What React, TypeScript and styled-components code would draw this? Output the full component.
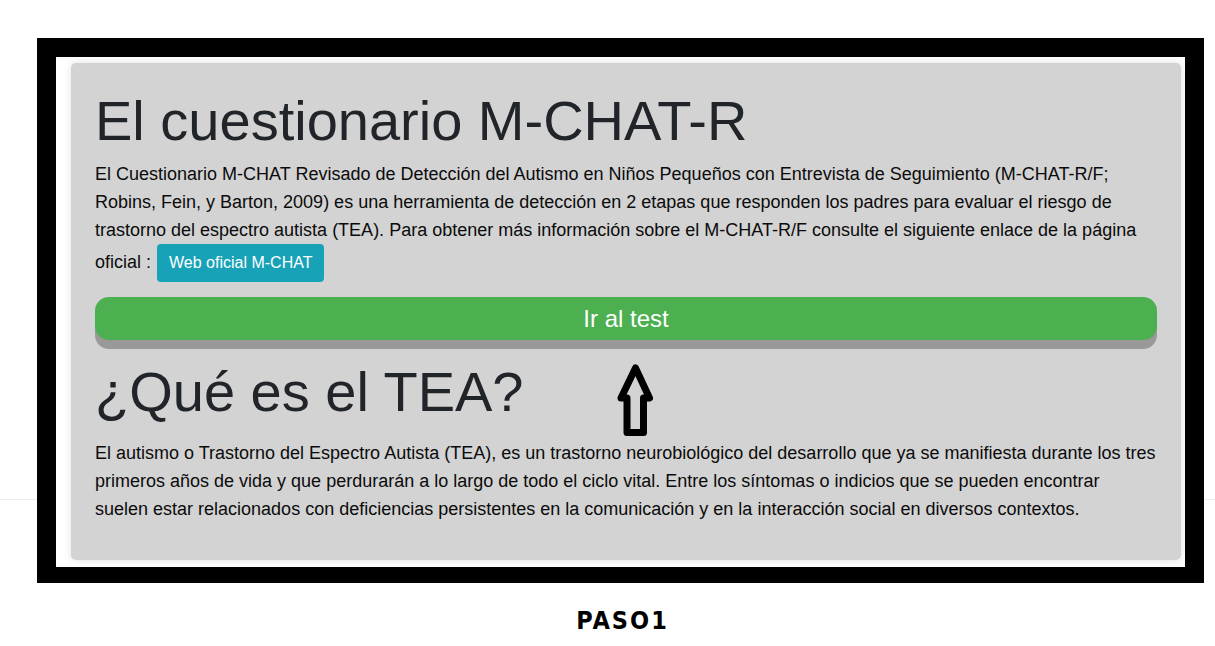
import React from "react";
import styled, { createGlobalStyle } from "styled-components";

const Global = createGlobalStyle`
  html, body {
    margin: 0;
    padding: 0;
    background: #fff;
  }
  body {
    font-family: "Liberation Sans", Arial, sans-serif;
    background-image: linear-gradient(#ececec, #ececec);
    background-repeat: no-repeat;
    background-size: 100% 1px;
    background-position: 0 499px;
  }
`;

const Page = styled.div`
  width: 1215px;
  height: 646px;
  padding: 38px 0 0 37px;
  box-sizing: border-box;
  display: flex;
  flex-direction: column;
  align-items: flex-start;
`;

const Frame = styled.div`
  width: 1167px;
  box-sizing: border-box;
  border: solid #000;
  border-width: 19px 19px 16px 19px;
  background: #fff;
  padding: 6px 4px 7px 15px;
`;

const Card = styled.section`
  position: relative;
  background: #d3d3d3;
  border-radius: 5px;
  box-shadow: 0 0 9px rgba(0, 0, 0, 0.12);
  padding: 24px 24px 24px 24px;
  height: 497px;
  box-sizing: border-box;
`;

const Title = styled.h1<{ $gap?: number }>`
  font-family: "Liberation Sans", Arial, sans-serif;
  font-weight: 400;
  font-size: 56px;
  line-height: 1.2;
  color: #212529;
  margin: ${(p) => p.$gap ?? 0}px 0 6px 0;
`;

const Text = styled.p<{ $bottom?: number; $top?: number }>`
  font-family: "Liberation Sans", Arial, sans-serif;
  font-size: 18px;
  line-height: 28px;
  color: #0b0b0b;
  margin: ${(p) => p.$top ?? 0}px 0 ${(p) => p.$bottom ?? 15}px 0;
`;

const InfoButton = styled.a`
  display: inline-block;
  vertical-align: middle;
  background: #17a2b8;
  color: #fff;
  font-size: 16px;
  line-height: 24px;
  padding: 7px 12px;
  border-radius: 4px;
  text-decoration: none;
  margin-left: 1px;
`;

const TestButton = styled.button`
  display: block;
  width: 100%;
  height: 43px;
  border: none;
  border-radius: 14px;
  background: #4caf50;
  color: #fff;
  font-family: "Liberation Sans", Arial, sans-serif;
  font-size: 24px;
  box-shadow: 0 9px 0 #999;
  cursor: pointer;
  padding: 0;
`;

const ArrowMark = styled.svg`
  position: absolute;
  left: 541px;
  top: 294px;
`;

const StepLabel = styled.div`
  align-self: stretch;
  width: 1167px;
  text-align: center;
  margin-top: 23px;
  font-family: "DejaVu Sans Condensed", "DejaVu Sans", "Liberation Sans", sans-serif;
  font-stretch: condensed;
  font-weight: 700;
  font-size: 25px;
  letter-spacing: 2px;
  color: #000;
  padding-left: 2px;
`;

export default function App() {
  return (
    <>
      <Global />
      <Page>
        <Frame>
          <Card>
            <Title>El cuestionario M-CHAT-R</Title>
            <Text>
              El Cuestionario M-CHAT Revisado de Detección del Autismo en Niños Pequeños con Entrevista de
              Seguimiento (M-CHAT-R/F; Robins, Fein, y Barton, 2009) es una herramienta de detección en 2 etapas
              que responden los padres para evaluar el riesgo de trastorno del espectro autista (TEA). Para
              obtener más información sobre el M-CHAT-R/F consulte el siguiente enlace de la página oficial :{" "}
              <InfoButton href="#">Web oficial M-CHAT</InfoButton>
            </Text>
            <TestButton>Ir al test</TestButton>
            <Title $gap={18}>¿Qué es el TEA?</Title>
            <Text $bottom={0} $top={14}>
              El autismo o Trastorno del Espectro Autista (TEA), es un trastorno neurobiológico del desarrollo que
              ya se manifiesta durante los tres primeros años de vida y que perdurarán a lo largo de todo el ciclo
              vital. Entre los síntomas o indicios que se pueden encontrar suelen estar relacionados con
              deficiencias persistentes en la comunicación y en la interacción social en diversos contextos.
            </Text>
            <ArrowMark width="48" height="84" viewBox="0 0 48 84" aria-hidden="true">
              <path
                d="M23.5 11 L37.5 41 L31.5 41 L31.5 75.5 L15 75.5 L15 41 L9 41 Z"
                fill="none"
                stroke="#000"
                strokeWidth="7"
                strokeLinejoin="round"
              />
            </ArrowMark>
          </Card>
        </Frame>
        <StepLabel>PASO1</StepLabel>
      </Page>
    </>
  );
}
